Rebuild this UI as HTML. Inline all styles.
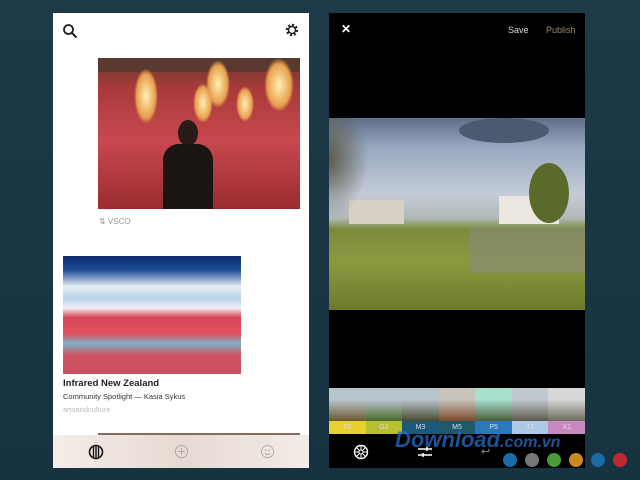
<!DOCTYPE html>
<html><head><style>
*{margin:0;padding:0;box-sizing:border-box}
body{width:640px;height:480px;overflow:hidden;background:linear-gradient(180deg,#1d3a48,#173240);font-family:"Liberation Sans",sans-serif;position:relative}
.a{position:absolute}
</style></head><body>
<div class="a" style="left:53px;top:13px;width:256px;height:455px;background:#fff">
  <svg class="a" style="left:9px;top:10px" width="16" height="16" viewBox="0 0 16 16"><circle cx="6.5" cy="6.5" r="4.5" fill="none" stroke="#222" stroke-width="1.8"/><path d="M10 10l4.5 4.5" stroke="#222" stroke-width="2"/></svg>
  <svg class="a" style="left:231px;top:9px" width="16" height="16" viewBox="0 0 16 16"><circle cx="8" cy="8" r="5" fill="none" stroke="#222" stroke-width="2.4" stroke-dasharray="2 1.9"/><circle cx="8" cy="8" r="3.5" fill="none" stroke="#222" stroke-width="1.5"/></svg>
  <div class="a" style="left:45px;top:45px;width:202px;height:151px;background:linear-gradient(180deg,#6a3a2a 0%,#a83a3a 20%,#c8484e 55%,#9a2c30 100%)">
    <div class="a" style="left:0;top:0;width:202px;height:14px;background:#5a3a30"></div>
    <div class="a" style="left:36px;top:10px;width:24px;height:56px;border-radius:50%;background:radial-gradient(#fff0b0,#e8a050 55%,transparent 70%)"></div>
    <div class="a" style="left:95px;top:25px;width:20px;height:40px;border-radius:50%;background:radial-gradient(#fff0b0,#e8a050 55%,transparent 70%)"></div>
    <div class="a" style="left:108px;top:2px;width:24px;height:48px;border-radius:50%;background:radial-gradient(#fff0b0,#e8a050 55%,transparent 70%)"></div>
    <div class="a" style="left:138px;top:28px;width:18px;height:36px;border-radius:50%;background:radial-gradient(#fff0b0,#e8a050 55%,transparent 70%)"></div>
    <div class="a" style="left:166px;top:0;width:30px;height:54px;border-radius:50%;background:radial-gradient(#fff0b0,#e8a050 55%,transparent 70%)"></div>
    <div class="a" style="left:80px;top:62px;width:20px;height:26px;border-radius:50%;background:#2a1a18"></div>
    <div class="a" style="left:65px;top:86px;width:50px;height:65px;border-radius:16px 16px 0 0;background:#1a1412"></div>
  </div>
  <div class="a" style="left:46px;top:204px;font-size:8px;color:#999">⇅ VSCO</div>
  <div class="a" style="left:10px;top:243px;width:178px;height:118px;background:linear-gradient(180deg,#0b2a6a 0%,#1e4e98 12%,#e8eef4 26%,#b8d0e8 36%,#f0f0f4 44%,#d84858 52%,#e05060 66%,#7ab0c8 74%,#d05464 84%,#c85060 100%)"></div>
  <div class="a" style="left:10px;top:365px;font-size:9.5px;font-weight:bold;color:#222">Infrared New Zealand</div>
  <div class="a" style="left:10px;top:379px;font-size:7.5px;color:#333">Community Spotlight — Kasia Sykus</div>
  <div class="a" style="left:10px;top:392px;font-size:7.5px;color:#bbb">artsandculture</div>
  <div class="a" style="left:45px;top:420px;width:202px;height:3px;background:#8a6a5a"></div>
  <div class="a" style="left:0;top:422px;width:256px;height:33px;background:linear-gradient(90deg,#f4ede9,#e8d9d2 50%,#f2ece8)"></div>
  <svg class="a" style="left:35px;top:431px" width="16" height="16" viewBox="0 0 16 16"><circle cx="8" cy="8" r="6.5" fill="none" stroke="#111" stroke-width="1.6"/><path d="M5.5 2.5v11M8 1.5v13M10.5 2.5v11" stroke="#111" stroke-width="1.4"/></svg>
  <svg class="a" style="left:121px;top:431px" width="15" height="15" viewBox="0 0 16 16"><circle cx="8" cy="8" r="6.5" fill="none" stroke="#aaa" stroke-width="1"/><path d="M8 4.5v7M4.5 8h7" stroke="#aaa"/></svg>
  <svg class="a" style="left:207px;top:431px" width="15" height="15" viewBox="0 0 16 16"><circle cx="8" cy="8" r="6.5" fill="none" stroke="#aaa" stroke-width="1"/><path d="M5 10q3 2.5 6 0M5 6.5h2M9 6.5h2" stroke="#aaa" fill="none"/></svg>
</div>
<div class="a" style="left:329px;top:13px;width:256px;height:455px;background:#000">
  <div class="a" style="left:12px;top:9px;color:#fff;font-size:12px;font-weight:bold">✕</div>
  <div class="a" style="left:179px;top:12px;color:#ddd;font-size:9px">Save</div>
  <div class="a" style="left:217px;top:12px;color:#9a8a6a;font-size:9px">Publish</div>
  <div class="a" style="left:0;top:105px;width:256px;height:192px;overflow:hidden;background:linear-gradient(180deg,#5e6e88 0%,#98a8c0 15%,#c4ccd8 40%,#b0b8b8 52%,#7a8a3a 58%,#8a9a40 75%,#6a7a2a 100%)">
    <div class="a" style="left:130px;top:0;width:90px;height:25px;border-radius:50%;background:#4a5a70"></div>
    <div class="a" style="left:170px;top:78px;width:60px;height:28px;background:#ece8e0"></div>
    <div class="a" style="left:20px;top:82px;width:55px;height:24px;background:#d8d0c4"></div>
    <div class="a" style="left:0;top:0;width:40px;height:100px;background:radial-gradient(ellipse at 0 40%,#5a5a48,transparent 70%)"></div>
    <div class="a" style="left:200px;top:45px;width:40px;height:60px;border-radius:50%;background:#5a6a2a"></div>
    <div class="a" style="left:140px;top:110px;width:116px;height:45px;background:#8a8a7a;opacity:.6"></div>
  </div>
  <div class="a" style="left:0;top:375px;width:256px;height:33px;display:flex">
    <div style="flex:1;background:linear-gradient(#b8c4cc 35%,#6a5a30)"></div><div style="flex:1;background:linear-gradient(#b8c4cc 35%,#4a6a28)"></div><div style="flex:1;background:linear-gradient(#b8c4cc 35%,#4a4a30)"></div><div style="flex:1;background:linear-gradient(#c8c4bc 35%,#7a4a28)"></div><div style="flex:1;background:linear-gradient(#a8e0d0 35%,#4a5a3a)"></div><div style="flex:1;background:linear-gradient(#c0c8d0 35%,#5a5a4a)"></div><div style="flex:1;background:linear-gradient(#d8d8d8 35%,#6a6a5a)"></div>
  </div>
  <div class="a" style="left:0;top:408px;width:256px;height:13px;display:flex;font-size:7px;color:#dde;text-align:center;line-height:13px">
    <div style="flex:1;background:#e8d030">F2</div><div style="flex:1;background:#b8c030">G3</div><div style="flex:1;background:#1a5a78">M3</div><div style="flex:1;background:#205a6a">M5</div><div style="flex:1;background:#2a78b8">P5</div><div style="flex:1;background:#b0c8e8">T1</div><div style="flex:1;background:#c888c0">X1</div>
  </div>
  <svg class="a" style="left:24px;top:431px" width="16" height="16" viewBox="0 0 16 16"><circle cx="8" cy="8" r="6.5" fill="none" stroke="#fff" stroke-width="1.4"/><circle cx="8" cy="8" r="2" fill="none" stroke="#fff"/><path d="M8 1.5v4.5M8 10v4.5M1.5 8h4.5M10 8h4.5M3.4 3.4l3.2 3.2M9.4 9.4l3.2 3.2M12.6 3.4l-3.2 3.2M6.6 9.4l-3.2 3.2" stroke="#fff"/></svg>
  <svg class="a" style="left:88px;top:432px" width="16" height="14" viewBox="0 0 16 14"><path d="M1 4h14M1 10h14M10 2v4M6 8v4" stroke="#fff" stroke-width="1.5"/></svg>
  <div class="a" style="left:152px;top:432px;color:#888;font-size:11px">↩</div>
</div>
<div class="a" style="left:395px;top:427px;font-size:22px;font-weight:bold;font-style:italic;color:rgba(40,110,200,.75)">Download<span style="font-size:16px">.com.vn</span></div>
<div class="a" style="left:503px;top:453px;width:14px;height:14px;border-radius:50%;background:#1a6aa8"></div>
<div class="a" style="left:525px;top:453px;width:14px;height:14px;border-radius:50%;background:#777"></div>
<div class="a" style="left:547px;top:453px;width:14px;height:14px;border-radius:50%;background:#4a9a38"></div>
<div class="a" style="left:569px;top:453px;width:14px;height:14px;border-radius:50%;background:#c88a20"></div>
<div class="a" style="left:591px;top:453px;width:14px;height:14px;border-radius:50%;background:#1a6aa8"></div>
<div class="a" style="left:613px;top:453px;width:14px;height:14px;border-radius:50%;background:#c02830"></div>
</body></html>
